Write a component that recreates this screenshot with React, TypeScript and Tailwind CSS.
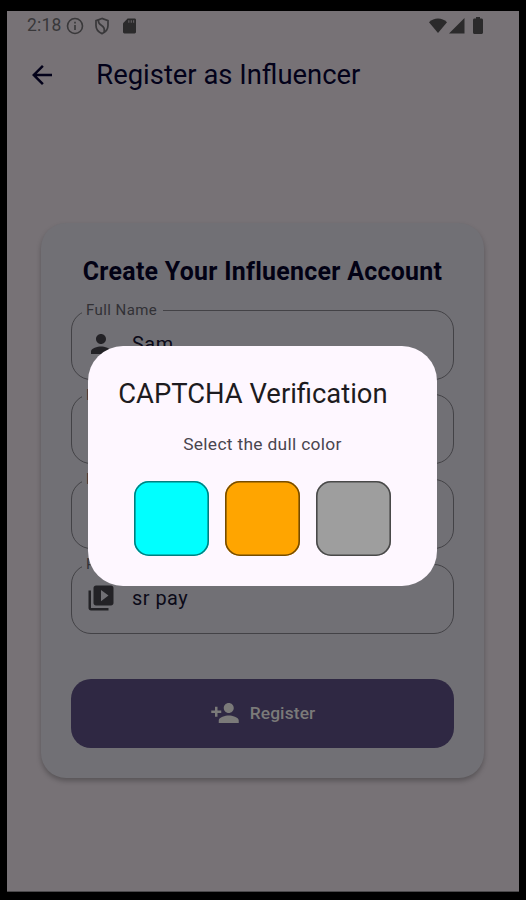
import type { ReactNode } from "react";

const person = "M12 12c2.21 0 4-1.79 4-4s-1.79-4-4-4-4 1.79-4 4 1.79 4 4 4zm0 2c-2.67 0-8 1.34-8 4v2h16v-2c0-2.66-5.33-4-8-4z";
const email = "M20 4H4c-1.1 0-2 .9-2 2v12c0 1.1.9 2 2 2h16c1.1 0 2-.9 2-2V6c0-1.1-.9-2-2-2zm0 4-8 5-8-5V6l8 5 8-5v2z";
const lock = "M18 8h-1V6a5 5 0 0 0-10 0v2H6a2 2 0 0 0-2 2v10c0 1.1.9 2 2 2h12a2 2 0 0 0 2-2V10a2 2 0 0 0-2-2zM9 8V6a3 3 0 0 1 6 0v2z";
const video = "M4 6H2v14c0 1.1.9 2 2 2h14v-2H4V6zm16-4H8c-1.1 0-2 .9-2 2v12c0 1.1.9 2 2 2h12c1.1 0 2-.9 2-2V4c0-1.1-.9-2-2-2zm-8 12.500v-9l6 4.500-6 4.500z";
const addPerson = "M15 12c2.210 0 4-1.790 4-4s-1.790-4-4-4-4 1.790-4 4 1.790 4 4 4zm-9-2V7H4v3H1v2h3v3h2v-3h3v-2H6zm9 4c-2.670 0-8 1.340-8 4v2h16v-2c0-2.660-5.330-4-8-4z";

function Icon({ d, className }: { d: string; className: string }) {
  return (
    <svg viewBox="0 0 24 24" className={className} fill="currentColor">
      <path d={d} />
    </svg>
  );
}

function Field({ label, icon, children }: { label: string; icon: string; children?: ReactNode }) {
  return (
    <fieldset className="h-[76.500px] rounded-[20px] border-[1.500px] border-[#434246] pl-[10px]">
      <legend className="h-[14px] pl-[4px] pr-[6px] text-[15px] leading-[14px] tracking-[0.420px] text-[#323135]">{label}</legend>
      <div className="flex h-[54px] items-center pl-[4px]">
        <Icon d={icon} className="size-[30px] text-[#232226]" />
        <span className="ml-[16px] pt-[2px] text-[19.900px] tracking-[0.500px] text-[#0b0a18]">{children}</span>
      </div>
    </fieldset>
  );
}

function StatusBar() {
  return (
    <div className="flex h-[29px] items-center pl-[20px] text-[#39383a]">
      <span className="w-[39px] text-[17.500px] leading-[29px] tracking-[0.200px]">2:18</span>
      <svg viewBox="0 0 18 18" className="size-[18px]" fill="none" stroke="currentColor" strokeWidth="1.600">
        <circle cx="9" cy="9" r="7.500" />
        <path d="M9 8v5M9 4.800v1.800" />
      </svg>
      <svg viewBox="0 0 16 18" className="ml-[10px] h-[18px] w-[16px]" fill="none" stroke="currentColor" strokeWidth="1.700">
        <path d="M8 1.500 2 3.600v5c0 3.700 2.500 6.600 6 8 3.500-1.400 6-4.300 6-8v-5z" />
        <path d="M4.500 2.800c-.5 2.700.5 4 2.800 5.400 2.700 1.600 3.700 3.500 2.700 6.800" />
      </svg>
      <svg viewBox="0 0 14 17" className="ml-[13px] h-[16px] w-[13px]" fill="#2b2a2b">
        <path d="M5 .500h7.500c.8 0 1.500.7 1.500 1.500v13c0 .8-.7 1.500-1.500 1.500h-11C.7 16.500 0 15.800 0 15V5.500z" />
        <path d="M6.300 2.300v2.700M8.900 2.300v2.700M11.500 2.300v2.700" stroke="#777276" strokeWidth=".9" />
      </svg>
      <svg viewBox="0 0 18 16" className="ml-[293px] h-[16px] w-[18px]" fill="#2b2a2b">
        <path d="M9 15 0 4.200C5-.6 13-.6 18 4.200z" />
      </svg>
      <svg viewBox="0 0 16 16" className="ml-[2px] size-[16px]" fill="#2b2a2b">
        <path d="M0 15.500 15.500 0v15.500z" />
      </svg>
      <svg viewBox="0 0 10 17" className="ml-[8px] h-[17px] w-[10px]" fill="#2b2a2b">
        <path d="M3 0h4v1.500h1.500C9.300 1.500 10 2.200 10 3v12.500c0 .8-.7 1.500-1.500 1.500h-7C.7 17 0 16.300 0 15.500V3c0-.8.7-1.500 1.500-1.500H3z" />
      </svg>
    </div>
  );
}

function CaptchaDialog() {
  return (
    <div className="absolute left-[88.300px] top-[346.400px] h-[239.200px] w-[348.400px] rounded-[35px] bg-[#fef7ff] pt-[30.700px]">
      <h2 className="pl-[30px] text-[27.400px] leading-[34px] text-[#1d1b20]">CAPTCHA Verification</h2>
      <p className="mt-[20.800px] text-center text-[17.400px] leading-[24px] tracking-[0.310px] text-[#49454f]">Select the dull color</p>
      <div className="mt-[25.100px] flex justify-center gap-[15.900px]">
        <div className="size-[74.800px] rounded-[15px] bg-[#00ffff] shadow-[inset_0_0_0_1.6px_#007f7f]" />
        <div className="size-[74.800px] rounded-[15px] bg-[#ffa500] shadow-[inset_0_0_0_1.6px_#754c00]" />
        <div className="size-[74.800px] rounded-[15px] bg-[#9e9e9e] shadow-[inset_0_0_0_1.6px_#494949]" />
      </div>
    </div>
  );
}

export default function App() {
  return (
    <div className="relative h-[900px] w-[526px] overflow-hidden bg-black px-[7px] pt-[11px] font-['Roboto',sans-serif]">
      <div className="h-[881px] border-b border-[#4b494b] bg-[#777276]">
        <StatusBar />
        <header className="flex h-[70px] items-center pl-[19.500px]">
          <Icon d="M20 11H7.830l5.590-5.590L12 4l-8 8 8 8 1.410-1.410L7.830 13H20v-2z" className="size-[30px] text-[#03021a]" />
          <h1 className="ml-[39.800px] text-[27.400px] leading-[34px] text-[#03021a]">Register as Influencer</h1>
        </header>
        <main className="ml-[34px] mt-[113px] h-[555px] w-[443px] rounded-[25px] bg-[#717075] px-[30px] pt-[32px] shadow-[0_3px_5px_rgba(0,0,0,0.26)]">
          <h2 className="text-center text-[24.900px] font-bold leading-[34px] tracking-[0.290px] whitespace-nowrap text-[#020114]">Create Your Influencer Account</h2>
          <form className="mt-[14px] flex flex-col gap-[8.200px]">
            <Field label="Full Name" icon={person}>Sam</Field>
            <Field label="Email" icon={email} />
            <Field label="Password" icon={lock} />
            <Field label="Platform" icon={video}>sr pay</Field>
          </form>
          <button className="mt-[45px] flex h-[69px] w-full items-center justify-center rounded-[20px] bg-[#2f2843] text-[#7b7a79]">
            <Icon d={addPerson} className="size-[30px]" />
            <span className="ml-[10px] text-[17.400px] font-medium tracking-[0.120px]">Register</span>
          </button>
        </main>
      </div>
      <CaptchaDialog />
    </div>
  );
}
